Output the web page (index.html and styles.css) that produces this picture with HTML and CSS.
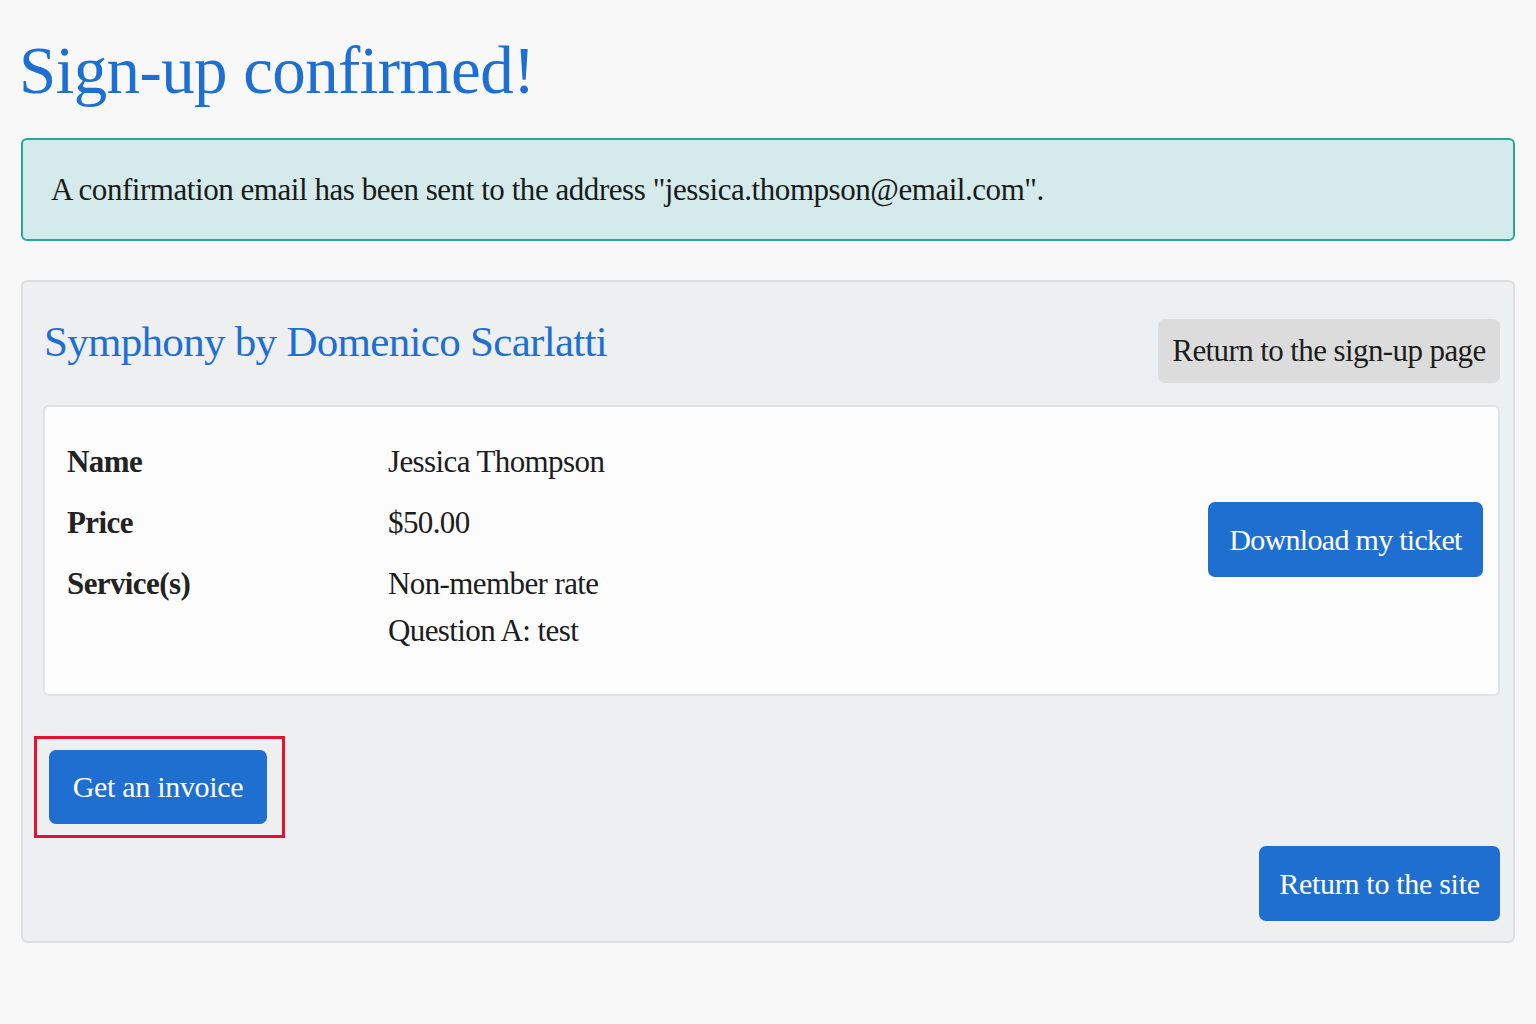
FILE: index.html
```html
<!DOCTYPE html>
<html lang="en">
<head>
<meta charset="utf-8">
<title>Sign-up confirmed</title>
<link rel="stylesheet" href="styles.css">
</head>
<body>
<main class="page">
  <h1 class="title">Sign-up confirmed!</h1>
  <div class="alert">A confirmation email has been sent to the address "jessica.thompson@email.com".</div>
  <section class="card">
    <div class="card-head">
      <h2 class="event">Symphony by Domenico Scarlatti</h2>
      <a class="btn btn-grey" href="#">Return to the sign-up page</a>
    </div>
    <div class="details">
      <div class="rows">
        <div class="row"><div class="label">Name</div><div class="value">Jessica Thompson</div></div>
        <div class="row"><div class="label">Price</div><div class="value">$50.00</div></div>
        <div class="row"><div class="label">Service(s)</div><div class="value"><div>Non-member rate</div><div>Question A: test</div></div></div>
      </div>
      <a class="btn btn-blue btn-ticket" href="#">Download my ticket</a>
    </div>
    <div class="invoice-wrap">
      <div class="highlight"><a class="btn btn-blue btn-invoice" href="#">Get an invoice</a></div>
    </div>
    <div class="foot">
      <a class="btn btn-blue btn-site" href="#">Return to the site</a>
    </div>
  </section>
</main>
</body>
</html>
```

FILE: styles.css
```css
html, body {
  margin: 0;
  padding: 0;
  background: #f8f8f9;
}
body {
  font-family: "Liberation Serif", "Times New Roman", serif;
  color: #1c1c1c;
}
.page {
  padding: 22px 21px 40px 21px;
}
.title {
  margin: 0 0 0 -2px;
  font-weight: 400;
  font-size: 67px;
  letter-spacing: -0.6px;
  line-height: 96px;
  color: #1e6fd2;
  height: 116px;
}
.alert {
  box-sizing: border-box;
  height: 103px;
  display: flex;
  align-items: center;
  padding: 0 28px;
  background: #d5eaea;
  border: 2px solid #27a79a;
  border-radius: 6px;
  font-size: 31px;
  letter-spacing: -0.45px;
  color: #1a1a1a;
}
.card {
  margin-top: 39px;
  box-sizing: border-box;
  height: 663px;
  background: #eeeff1;
  border: 2px solid #dedfe1;
  border-radius: 6px;
  padding: 36px 13px 20px 20px;
  display: flex;
  flex-direction: column;
}
.card-head {
  display: flex;
  justify-content: space-between;
  align-items: center;
  height: 66px;
}
.event {
  margin: 0 0 20px 1px;
  font-weight: 400;
  font-size: 43px;
  letter-spacing: -0.7px;
  color: #1e6fd2;
}
.btn {
  display: inline-flex;
  align-items: center;
  justify-content: center;
  text-decoration: none;
  border-radius: 7px;
  font-size: 30px;
  letter-spacing: -0.3px;
  white-space: nowrap;
  box-sizing: border-box;
}
.btn-grey {
  background: #dcdcdc;
  color: #1c1c1c;
  height: 64px;
  width: 342px;
  font-size: 31px;
  letter-spacing: -0.6px;
}
.btn-blue {
  background: #1f6fd1;
  color: #ffffff;
}
.details {
  margin-top: 21px;
  box-sizing: border-box;
  height: 294px;
  background: #fcfcfc;
  border: 2px solid #e1e2e4;
  border-radius: 6px;
  display: flex;
  justify-content: space-between;
  align-items: flex-start;
  padding: 30px 15px 0 22px;
}
.rows {
  display: flex;
  flex-direction: column;
  gap: 12px;
}
.row {
  display: flex;
  font-size: 31px;
  letter-spacing: -0.6px;
  line-height: 49px;
}
.label {
  width: 321px;
  font-weight: 700;
  color: #222;
}
.value {
  color: #1c1c1c;
}
.value > div + div {
  margin-top: -14px;
  padding-top: 12px;
}
.btn-ticket {
  margin-top: 65px;
  width: 275px;
  height: 75px;
  letter-spacing: -0.7px;
}
.invoice-wrap {
  margin-top: 40px;
  margin-left: -9px;
}
.highlight {
  display: inline-block;
  border: 3px solid #e8102c;
  padding: 11px 15px 11px 12px;
}
.btn-invoice {
  width: 218px;
  height: 74px;
}
.foot {
  display: flex;
  justify-content: flex-end;
  margin-top: 8px;
}
.btn-site {
  width: 241px;
  height: 75px;
}
```
